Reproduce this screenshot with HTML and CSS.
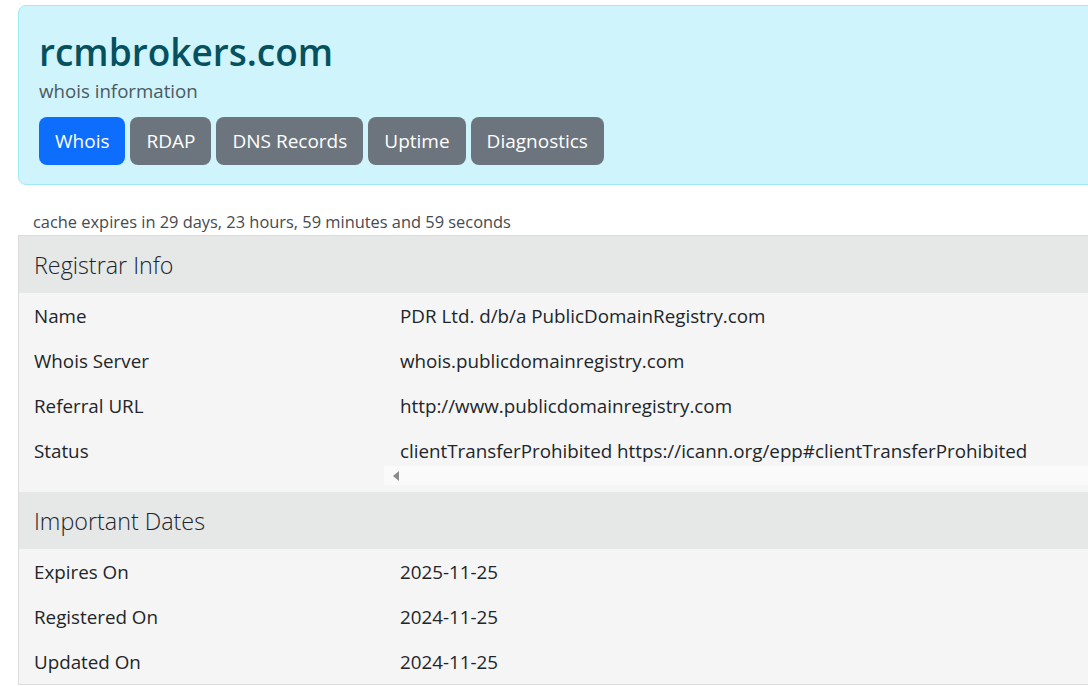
FILE: index.html
```html
<!DOCTYPE html>
<html lang="en">
<head>
<meta charset="utf-8">
<title>rcmbrokers.com whois information</title>
<link rel="stylesheet" href="styles.css">
</head>
<body>
<div class="page">
  <header class="hero">
    <h1 class="hero-title">rcmbrokers.com</h1>
    <p class="hero-sub">whois information</p>
    <nav class="tabs">
      <a class="btn btn-primary" href="#">Whois</a>
      <a class="btn btn-secondary" href="#">RDAP</a>
      <a class="btn btn-secondary" href="#">DNS Records</a>
      <a class="btn btn-secondary" href="#">Uptime</a>
      <a class="btn btn-secondary" href="#">Diagnostics</a>
    </nav>
  </header>

  <p class="cache">cache expires in 29 days, 23 hours, 59 minutes and 59 seconds</p>

  <section class="info">
    <div class="info-head">Registrar Info</div>
    <div class="info-row"><div class="info-key">Name</div><div class="info-val">PDR Ltd. d/b/a PublicDomainRegistry.com</div></div>
    <div class="info-row"><div class="info-key">Whois Server</div><div class="info-val">whois.publicdomainregistry.com</div></div>
    <div class="info-row"><div class="info-key">Referral URL</div><div class="info-val">http://www.publicdomainregistry.com</div></div>
    <div class="info-row info-row-scroll">
      <div class="info-key">Status</div>
      <div class="info-scroll">
        <div class="info-val">clientTransferProhibited https://icann.org/epp#clientTransferProhibited</div>
        <div class="hscroll"><span class="hscroll-arrow"></span></div>
      </div>
    </div>

    <div class="info-head">Important Dates</div>
    <div class="info-row"><div class="info-key">Expires On</div><div class="info-val">2025-11-25</div></div>
    <div class="info-row"><div class="info-key">Registered On</div><div class="info-val">2024-11-25</div></div>
    <div class="info-row"><div class="info-key">Updated On</div><div class="info-val">2024-11-25</div></div>
  </section>
</div>
</body>
</html>
```

FILE: styles.css
```css
html, body {
  margin: 0;
  padding: 0;
  overflow: hidden;
  background: #ffffff;
}

body {
  font-family: "Open Sans", "Noto Sans", sans-serif;
  color: #212529;
  font-size: 16px;
}

.page {
  padding: 5px 0 0 18px;
  width: 1200px;
}

.hero {
  background: #cff4fc;
  border: 1px solid #9eeaf9;
  border-radius: 8px;
  padding: 24px 20px 19px 20px;
}

.hero-title {
  margin: 0;
  font-size: 37px;
  font-weight: 600;
  line-height: 44px;
  color: #055160;
}

.hero-sub {
  margin: 3px 0 12px 0;
  font-size: 18.7px;
  line-height: 28px;
  color: #4b5a61;
  font-weight: 400;
}

.tabs {
  display: flex;
  gap: 5px;
}

.btn {
  display: inline-block;
  font-size: 19px;
  line-height: 29px;
  padding: 10px 16px 9px 16px;
  border-radius: 8px;
  color: #ffffff;
  text-decoration: none;
}

.btn-primary { background: #0d6efd; }
.btn-secondary { background: #6c757d; }

.cache {
  margin: 25px 0 1px 15px;
  font-size: 16.4px;
  line-height: 24px;
  color: #444b50;
}

.info {
  border-left: 1px solid #dcdcdc;
  border-top: 1px solid #dcdcdc;
  border-bottom: 1px solid #dcdcdc;
  background: #f5f5f5;
}

.info-head {
  background: #e6e7e7;
  font-size: 23.3px;
  font-weight: 300;
  line-height: 55px;
  padding: 2px 0 0 15px;
  color: #212529;
}

.info-row {
  display: flex;
  font-size: 18.8px;
  line-height: 25px;
  padding: 11px 0 9px 0;
}

.info-key {
  width: 366px;
  padding-left: 15px;
  flex: none;
}

.info-val {
  white-space: nowrap;
}

.info-row-scroll {
  padding-bottom: 7px;
}

.info-scroll {
  margin-left: -16px;
  flex: 1;
}

.info-scroll .info-val {
  padding-left: 16px;
}

.hscroll {
  margin-top: 2px;
  height: 19px;
  background: #fafafa;
  display: flex;
  align-items: center;
  padding-left: 9px;
}

.hscroll-arrow {
  width: 0;
  height: 0;
  border-top: 5px solid transparent;
  border-bottom: 5px solid transparent;
  border-right: 6px solid #8a8a8a;
}
```
